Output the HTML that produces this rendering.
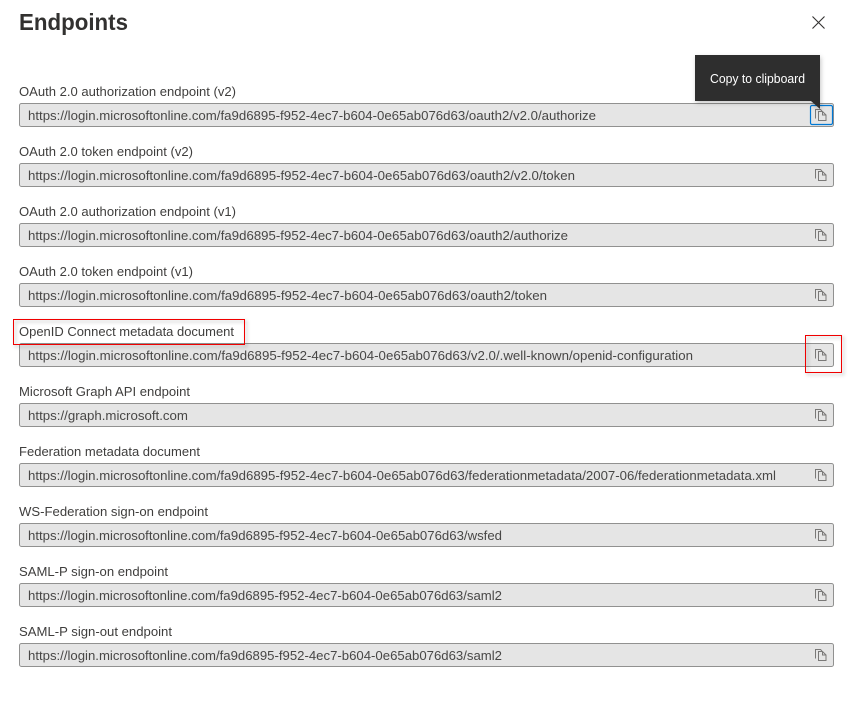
<!DOCTYPE html>
<html lang="en">
<head>
<meta charset="utf-8">
<title>Endpoints</title>
<style>
html,body{margin:0;padding:0;background:#fff;width:851px;height:712px;overflow:hidden}
svg{display:block;position:absolute;left:0;top:0}
text{font-family:"Liberation Sans",sans-serif;font-size:12.5px}
.l{fill:#3f3e3d}
.u{fill:#484746}
.b{fill:#e5e5e5;stroke:#919190;stroke-width:1}
.i{fill:none;stroke:#7a7978;stroke-width:1}
</style>
</head>
<body>
<svg width="851" height="712" viewBox="0 0 851 712" xmlns="http://www.w3.org/2000/svg">
<defs>
<g id="c">
<path class="i" d="M.5 9.5V.5H5.5L7 2M3.5 11.5V2.5H7.5L11 6V11.5Z"/>
<path class="i" d="M7.5 2.5V6H11"/>
</g>
<filter id="s" x="-30%" y="-30%" width="160%" height="170%"><feDropShadow dx="1" dy="2" stdDeviation="2.5" flood-color="#000" flood-opacity=".22"/></filter>
<filter id="r" x="-20%" y="-40%" width="140%" height="180%"><feDropShadow dx="2" dy="2" stdDeviation="1.8" flood-color="#000" flood-opacity=".3"/></filter>
</defs>

<text x="19" y="30" font-weight="700" fill="#323130" textLength="109" lengthAdjust="spacingAndGlyphs" style="font-size:23px">Endpoints</text>

<path d="M812.5 16.5L824.5 28.5M824.5 16.5L812.5 28.5" fill="none" stroke="#323130" stroke-width="1.1"/>

<text class="l" x="19" y="96" textLength="217" lengthAdjust="spacingAndGlyphs">OAuth 2.0 authorization endpoint (v2)</text>
<rect class="b" x="19.5" y="103.5" width="814" height="23" rx="2"/>
<text class="u" x="28" y="120" textLength="568" lengthAdjust="spacingAndGlyphs">https://login.microsoftonline.com/fa9d6895-f952-4ec7-b604-0e65ab076d63/oauth2/v2.0/authorize</text>
<rect x="810.5" y="105.5" width="22" height="19" rx="1.5" fill="none" stroke="#0078d4" stroke-width="1.2"/>
<use href="#c" x="815" y="109"/>

<text class="l" x="19" y="156" textLength="174" lengthAdjust="spacingAndGlyphs">OAuth 2.0 token endpoint (v2)</text>
<rect class="b" x="19.5" y="163.5" width="814" height="23" rx="2"/>
<text class="u" x="28" y="180" textLength="547" lengthAdjust="spacingAndGlyphs">https://login.microsoftonline.com/fa9d6895-f952-4ec7-b604-0e65ab076d63/oauth2/v2.0/token</text>
<use href="#c" x="815" y="169"/>

<text class="l" x="19" y="216" textLength="217" lengthAdjust="spacingAndGlyphs">OAuth 2.0 authorization endpoint (v1)</text>
<rect class="b" x="19.5" y="223.5" width="814" height="23" rx="2"/>
<text class="u" x="28" y="240" textLength="540" lengthAdjust="spacingAndGlyphs">https://login.microsoftonline.com/fa9d6895-f952-4ec7-b604-0e65ab076d63/oauth2/authorize</text>
<use href="#c" x="815" y="229"/>

<text class="l" x="19" y="276" textLength="174" lengthAdjust="spacingAndGlyphs">OAuth 2.0 token endpoint (v1)</text>
<rect class="b" x="19.5" y="283.5" width="814" height="23" rx="2"/>
<text class="u" x="28" y="300" textLength="519" lengthAdjust="spacingAndGlyphs">https://login.microsoftonline.com/fa9d6895-f952-4ec7-b604-0e65ab076d63/oauth2/token</text>
<use href="#c" x="815" y="289"/>

<text class="l" x="19" y="336" textLength="215" lengthAdjust="spacingAndGlyphs">OpenID Connect metadata document</text>
<rect class="b" x="19.5" y="343.5" width="814" height="23" rx="2"/>
<text class="u" x="28" y="360" textLength="665" lengthAdjust="spacingAndGlyphs">https://login.microsoftonline.com/fa9d6895-f952-4ec7-b604-0e65ab076d63/v2.0/.well-known/openid-configuration</text>
<use href="#c" x="815" y="349"/>

<text class="l" x="19" y="396" textLength="171" lengthAdjust="spacingAndGlyphs">Microsoft Graph API endpoint</text>
<rect class="b" x="19.5" y="403.5" width="814" height="23" rx="2"/>
<text class="u" x="28" y="420" textLength="160" lengthAdjust="spacingAndGlyphs">https://graph.microsoft.com</text>
<use href="#c" x="815" y="409"/>

<text class="l" x="19" y="456" textLength="181" lengthAdjust="spacingAndGlyphs">Federation metadata document</text>
<rect class="b" x="19.5" y="463.5" width="814" height="23" rx="2"/>
<text class="u" x="28" y="480" textLength="748" lengthAdjust="spacingAndGlyphs">https://login.microsoftonline.com/fa9d6895-f952-4ec7-b604-0e65ab076d63/federationmetadata/2007-06/federationmetadata.xml</text>
<use href="#c" x="815" y="469"/>

<text class="l" x="19" y="516" textLength="189" lengthAdjust="spacingAndGlyphs">WS-Federation sign-on endpoint</text>
<rect class="b" x="19.5" y="523.5" width="814" height="23" rx="2"/>
<text class="u" x="28" y="540" textLength="474" lengthAdjust="spacingAndGlyphs">https://login.microsoftonline.com/fa9d6895-f952-4ec7-b604-0e65ab076d63/wsfed</text>
<use href="#c" x="815" y="529"/>

<text class="l" x="19" y="576" textLength="149" lengthAdjust="spacingAndGlyphs">SAML-P sign-on endpoint</text>
<rect class="b" x="19.5" y="583.5" width="814" height="23" rx="2"/>
<text class="u" x="28" y="600" textLength="474" lengthAdjust="spacingAndGlyphs">https://login.microsoftonline.com/fa9d6895-f952-4ec7-b604-0e65ab076d63/saml2</text>
<use href="#c" x="815" y="589"/>

<text class="l" x="19" y="636" textLength="153" lengthAdjust="spacingAndGlyphs">SAML-P sign-out endpoint</text>
<rect class="b" x="19.5" y="643.5" width="814" height="23" rx="2"/>
<text class="u" x="28" y="660" textLength="474" lengthAdjust="spacingAndGlyphs">https://login.microsoftonline.com/fa9d6895-f952-4ec7-b604-0e65ab076d63/saml2</text>
<use href="#c" x="815" y="649"/>

<!-- Tooltip -->
<g filter="url(#s)">
<rect x="695" y="55" width="125" height="46" fill="#2d2d2d"/>
<path d="M811 101H820V109Z" fill="#2d2d2d"/>
</g>
<text x="710" y="83" fill="#fff" textLength="95" lengthAdjust="spacingAndGlyphs">Copy to clipboard</text>

<!-- Annotations -->
<rect x="13.5" y="319.5" width="231" height="25" fill="none" stroke="#f00000" stroke-width="1" shape-rendering="crispEdges" filter="url(#r)"/>
<rect x="805.5" y="335.5" width="36" height="37" fill="none" stroke="#f00000" stroke-width="1" shape-rendering="crispEdges" filter="url(#r)"/>
</svg>
</body>
</html>
